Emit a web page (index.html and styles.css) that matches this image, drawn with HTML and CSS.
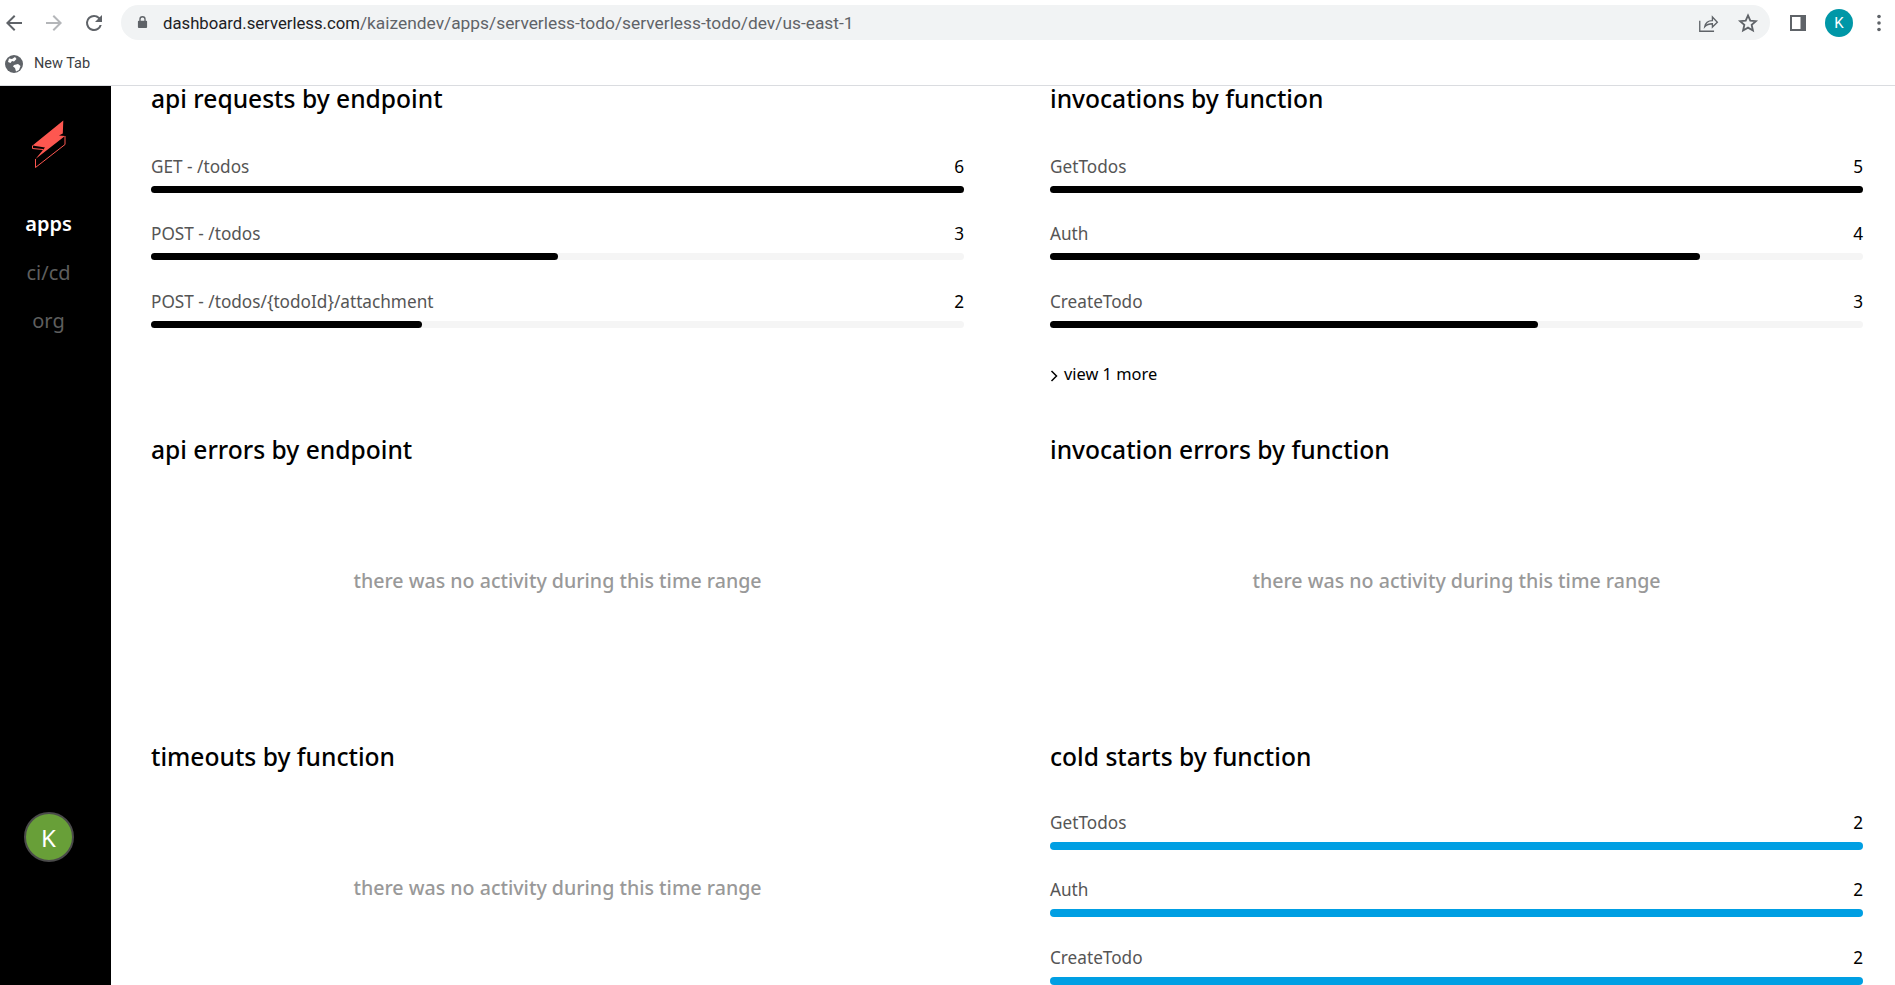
FILE: index.html
```html
<!DOCTYPE html>
<html lang="en">
<head>
<meta charset="utf-8">
<title>serverless-todo</title>
<link rel="stylesheet" href="styles.css">
</head>
<body>
<header class="chrome">
  <div class="toolbar">
    <div class="nav">
      <svg class="ico" viewBox="0 0 24 24"><path d="M20 11H7.830l5.590-5.590L12 4l-8 8 8 8 1.410-1.410L7.830 13H20v-2z" fill="#5f6368"/></svg>
      <svg class="ico" viewBox="0 0 24 24"><path d="M4 11h12.170l-5.590-5.590L12 4l8 8-8 8-1.410-1.410L16.170 13H4v-2z" fill="#b4b6b9"/></svg>
      <svg class="ico" viewBox="0 0 24 24"><path d="M17.650 6.350A7.960 7.960 0 0 0 12 4a8 8 0 1 0 7.730 10h-2.080A6 6 0 1 1 12 6c1.660 0 3.140.69 4.220 1.780L13 11h7V4l-2.350 2.350z" fill="#5f6368"/></svg>
    </div>
    <div class="omnibox">
      <svg class="lock" viewBox="0 0 12 14"><path d="M10 5H9.500V3.500a3.500 3.500 0 0 0-7 0V5H2a1 1 0 0 0-1 1v6a1 1 0 0 0 1 1h8a1 1 0 0 0 1-1V6a1 1 0 0 0-1-1zM4 3.500a2 2 0 0 1 4 0V5H4V3.500z" fill="#5f6368"/></svg>
      <div class="url"><span class="host">dashboard.serverless.com</span>/kaizendev/apps/serverless-todo/serverless-todo/dev/us-east-1</div>
      <svg class="ico share" viewBox="0 0 20 20"><path d="M2.500 8v9.500h13M7 13.500c.6-3.600 3.200-5.700 7-5.700V4.500l4.500 4.800-4.500 4.400v-3c-3 0-5.300.9-7 2.800z" fill="none" stroke="#5f6368" stroke-width="1.200"/></svg>
      <svg class="ico star" viewBox="0 0 24 24"><path d="M12 3.800l2.500 5.600 6.100.6-4.600 4.100 1.350 6L12 17l-5.350 3.100L8 14.100 3.400 10l6.100-.6z" fill="none" stroke="#5f6368" stroke-width="2"/></svg>
    </div>
    <div class="tools">
      <svg class="panel" viewBox="0 0 18 18"><rect x="1" y="1" width="16" height="16" fill="#5f6368"/><rect x="3" y="3" width="8.500" height="12" fill="#fff"/></svg>
      <div class="profile">K</div>
      <svg class="dots" viewBox="0 0 4 18"><circle cx="2" cy="2.500" r="1.800"/><circle cx="2" cy="9" r="1.800"/><circle cx="2" cy="15.500" r="1.800"/></svg>
    </div>
  </div>
  <div class="bookmarks">
    <svg class="globe" viewBox="0 0 18 18"><circle cx="9" cy="9" r="9" fill="#5f6368"/><path d="M4 3.500l3 .5 3-2 1.500 2L9 6.500 7 6 5.500 8 3 7zM9 10l4-1 2.500 2-1.500 4-3 1.500-1-3.500-2-1.500z" fill="#fff"/></svg>
    <span>New Tab</span>
  </div>
</header>
<div class="app">
  <aside class="sidebar">
    <svg class="logo" viewBox="0 0 34 48"><path d="M31.300 0.500 L30.800 13.500 L27 15.500 L33 16 L3.500 39 L13 27.500 L0.500 25.500 Z" fill="#fd5750"/><path d="M0.500 25.500 V28.500 L11 29.500 M3.500 39 V47.500 L33 24.500 V16" fill="none" stroke="#fd5750" stroke-width="1"/></svg>
    <nav class="menu">
      <a class="item active">apps</a>
      <a class="item">ci/cd</a>
      <a class="item">org</a>
    </nav>
    <div class="avatar">K</div>
  </aside>
  <main class="content">
    <section class="card first">
      <h2>api requests by endpoint</h2>
      <div class="row"><div class="label"><span>GET - /todos</span><b>6</b></div><div class="track"><div class="fill" style="width:100%"></div></div></div>
      <div class="row"><div class="label"><span>POST - /todos</span><b>3</b></div><div class="track"><div class="fill" style="width:50%"></div></div></div>
      <div class="row"><div class="label"><span>POST - /todos/{todoId}/attachment</span><b>2</b></div><div class="track"><div class="fill" style="width:33.33%"></div></div></div>
    </section>
    <section class="card first">
      <h2>invocations by function</h2>
      <div class="row"><div class="label"><span>GetTodos</span><b>5</b></div><div class="track"><div class="fill" style="width:100%"></div></div></div>
      <div class="row"><div class="label"><span>Auth</span><b>4</b></div><div class="track"><div class="fill" style="width:80%"></div></div></div>
      <div class="row"><div class="label"><span>CreateTodo</span><b>3</b></div><div class="track"><div class="fill" style="width:60%"></div></div></div>
      <div class="more"><svg viewBox="0 0 8 12"><path d="M1.500 1l5 5-5 5" fill="none" stroke="#000" stroke-width="1.500"/></svg>view 1 more</div>
    </section>
    <section class="card second">
      <h2>api errors by endpoint</h2>
      <p class="empty">there was no activity during this time range</p>
    </section>
    <section class="card second">
      <h2>invocation errors by function</h2>
      <p class="empty">there was no activity during this time range</p>
    </section>
    <section class="card">
      <h2>timeouts by function</h2>
      <p class="empty">there was no activity during this time range</p>
    </section>
    <section class="card tight">
      <h2>cold starts by function</h2>
      <div class="row blue"><div class="label"><span>GetTodos</span><b>2</b></div><div class="track"><div class="fill" style="width:100%"></div></div></div>
      <div class="row blue"><div class="label"><span>Auth</span><b>2</b></div><div class="track"><div class="fill" style="width:100%"></div></div></div>
      <div class="row blue"><div class="label"><span>CreateTodo</span><b>2</b></div><div class="track"><div class="fill" style="width:100%"></div></div></div>
    </section>
  </main>
</div>
</body>
</html>
```
FILE: styles.css
```css
* { box-sizing: border-box; }
html, body { margin: 0; height: 985px; overflow: hidden; background: #fff; }
body { font-family: "Noto Sans", "Open Sans", sans-serif; display: flex; flex-direction: column; }

.chrome { height: 86px; border-bottom: 1px solid #dadce0; flex: none; font-family: "Roboto", sans-serif; }
.toolbar { height: 45px; display: flex; align-items: center; }
.nav { display: flex; gap: 16px; padding-left: 2px; width: 121px; flex: none; }
.ico { width: 24px; height: 24px; display: block; }
.omnibox { flex: 1; height: 35px; background: #f1f3f4; border-radius: 18px; display: flex; align-items: center; padding: 0 11px 0 16px; }
.lock { width: 11px; height: 13px; flex: none; }
.url { margin-left: 15px; flex: 1; font-size: 17.350px; color: #5f6368; white-space: nowrap; }
.host { color: #202124; font-size: 16.720px; }
.share { width: 22px; height: 22px; margin-right: 18px; }
.star { width: 22px; height: 22px; }
.tools { width: 125px; flex: none; display: flex; align-items: center; padding-left: 19px; }
.panel { width: 18px; height: 18px; flex: none; }
.profile { width: 28px; height: 28px; margin-left: 18px; border-radius: 50%; background: #0097a7; color: #fff; font-size: 15px; display: flex; align-items: center; justify-content: center; }
.dots { width: 4px; height: 18px; margin-left: 24px; fill: #5f6368; }
.bookmarks { height: 40px; display: flex; align-items: center; padding-left: 5px; padding-bottom: 3px; font-size: 14.500px; color: #3c4043; }
.globe { width: 18px; height: 18px; margin-right: 11px; }

.app { flex: 1; display: flex; min-height: 0; }
.sidebar { width: 111px; flex: none; background: #000; display: flex; flex-direction: column; align-items: center; padding: 34px 14px 0 0; }
.logo { width: 34px; height: 48px; flex: none; }
.menu { display: flex; flex-direction: column; align-items: center; margin-top: 41px; gap: 19.500px; }
.item { font-size: 20px; line-height: 29px; color: #5e5e5e; }
.item.active { color: #fff; font-weight: 600; }
.avatar { margin-top: 477px; width: 50px; height: 50px; flex: none; border-radius: 50%; background: #689f38; border: 2px solid #4a4a4a; color: #fff; font-size: 24px; display: flex; align-items: center; justify-content: center; }

.content { flex: 1; min-width: 0; display: grid; grid-template-columns: 813px 813px; column-gap: 86px; grid-auto-rows: min-content; padding-left: 40px; }
.card { min-width: 0; }
.card.first { height: 351px; }
.card.second { height: 307px; }
h2 { margin: 0 0 39px; font-size: 24.600px; line-height: 26px; font-weight: 500; color: #000; }
.tight h2 { margin-bottom: 37px; }
.row { height: 67.400px; }
.label { display: flex; justify-content: space-between; font-size: 17.200px; line-height: 24px; height: 35px; padding-top: 4px; color: #555; }
.label b { font-weight: 400; color: #000; }
.track { height: 7px; border-radius: 4px; background: #f5f5f5; }
.fill { height: 7px; border-radius: 4px; background: #000; }
.blue .track, .blue .fill { height: 8px; }
.blue .fill { background: #009fe3; }
.more { display: flex; align-items: center; gap: 6px; font-size: 16.400px; line-height: 24px; color: #000; margin-top: 9px; }
.more svg { width: 8px; height: 12px; margin-top: 3px; }
.empty { margin: 104px 0 0; text-align: center; font-size: 19.600px; line-height: 28px; font-weight: 500; color: #999; }
```
